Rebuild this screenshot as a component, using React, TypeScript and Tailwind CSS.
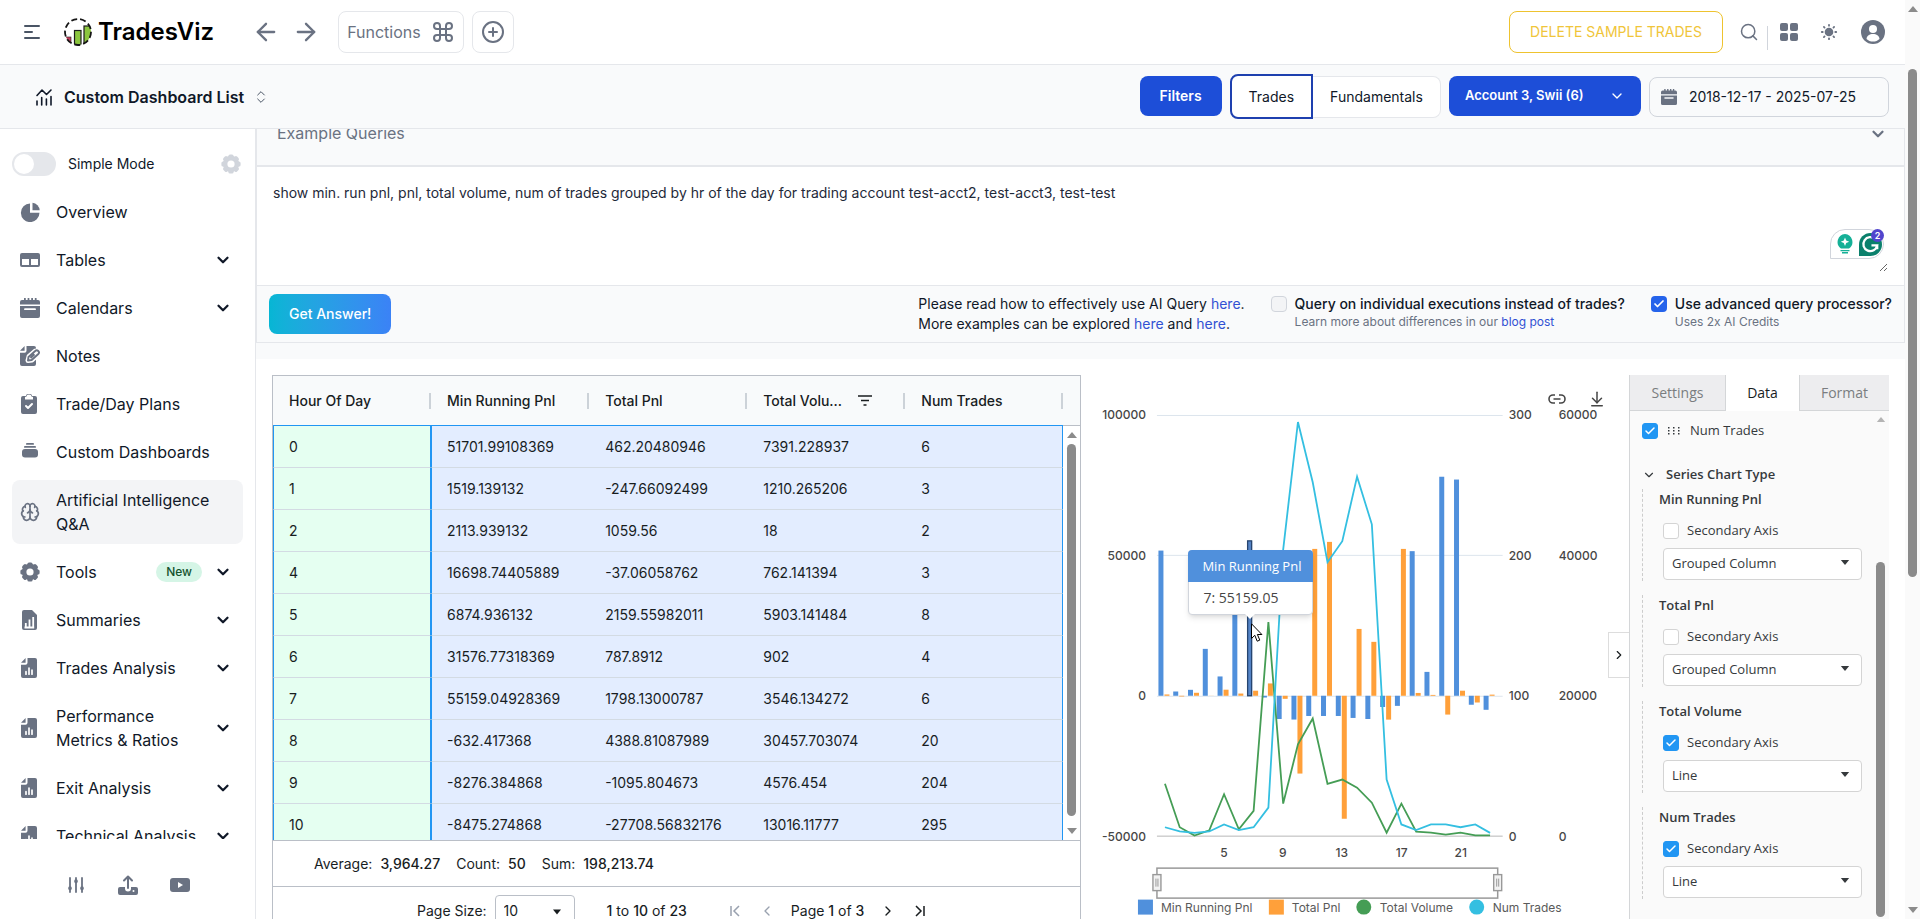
import React from "react";
import { ArrowLeft, ArrowRight, ArrowDownToLine, Brain, Check, ChevronDown, ChevronLeft, ChevronRight, ChevronsUpDown, CirclePlus, Command, Search } from "lucide-react";

type IconProps = { className?: string };

const GEAR_TEETH = [0, 45, 90, 135, 180, 225, 270, 315];

function PieIcon({ className }: IconProps) {
  return (
    <svg viewBox="0 0 20 20" className={className} fill="currentColor" aria-hidden="true">
      <path d="M10 1.500v9.300h9.500A9.300 9.300 0 1 1 10 1.500Z" />
      <path d="M12.500.700a8.200 8.200 0 0 1 7.200 7.600h-7.200Z" />
    </svg>
  );
}

function GearIcon({ className }: IconProps) {
  return (
    <svg viewBox="0 0 20 20" className={className} fill="currentColor" aria-hidden="true">
      <mask id="gear-hole">
        <rect width="20" height="20" fill="white" />
        <circle cx="10" cy="10" r="3.6" fill="black" />
      </mask>
      <g mask="url(#gear-hole)">
        <circle cx="10" cy="10" r="8.2" />
        {GEAR_TEETH.map((a) => (
          <rect key={a} x="7.4" y="0.4" width="5.2" height="5" rx="1.6" transform={`rotate(${a} 10 10)`} />
        ))}
      </g>
    </svg>
  );
}

function TableIcon({ className }: IconProps) {
  return (
    <svg viewBox="0 0 20 20" className={className} aria-hidden="true">
      <rect x="0" y="3" width="20" height="14" rx="2" fill="currentColor" />
      <rect x="2" y="9" width="7" height="6" fill="white" />
      <rect x="11" y="9" width="7" height="6" fill="white" />
    </svg>
  );
}

function CalendarIcon({ className }: IconProps) {
  return (
    <svg viewBox="0 0 20 20" className={className} fill="currentColor" aria-hidden="true">
      <path d="M0 6.5V4a2 2 0 0 1 2-2h2V.6a.9.9 0 0 1 1.8 0V2h1.8V.6a.9.9 0 0 1 1.8 0V2h1.8V.6a.9.9 0 0 1 1.8 0V2h1.8V.6a.9.9 0 0 1 1.8 0V2H18a2 2 0 0 1 2 2v2.500Z" />
      <path fillRule="evenodd" d="M0 8h20v10a2 2 0 0 1-2 2H2a2 2 0 0 1-2-2V8Zm5 2.200a.9.9 0 0 0 0 1.900h10a.9.9 0 0 0 0-1.900H5Z" />
    </svg>
  );
}

function NotesIcon({ className }: IconProps) {
  return (
    <svg viewBox="0 0 20 20" className={className} aria-hidden="true">
      <path fill="currentColor" d="M0 4.800 4.600 0v4.800H0ZM6.500 0H14a2 2 0 0 1 2 2v16a2 2 0 0 1-2 2H2a2 2 0 0 1-2-2V6.700h4.500a2 2 0 0 0 2-2V0Z" />
      <path fill="white" stroke="white" strokeWidth="5" strokeLinejoin="round" d="m8 14.500 1-4 6.500-5.500 3 3-6.500 6-4 .500Z" />
      <path fill="none" stroke="currentColor" strokeWidth="1.900" strokeLinejoin="round" d="m8 14.500.500-3.500 6.700-6a2.100 2.100 0 0 1 3.100 3l-6.600 6L8 14.500Zm2.500-2.500 4-3.700" />
    </svg>
  );
}

function ClipboardIcon({ className }: IconProps) {
  return (
    <svg viewBox="0 0 20 20" className={className} aria-hidden="true">
      <path fill="currentColor" d="M3 2h3a2 2 0 0 1 2-2h2a2 2 0 0 1 2 2h3a2 2 0 0 1 2 2v14a2 2 0 0 1-2 2H3a2 2 0 0 1-2-2V4a2 2 0 0 1 2-2Z" />
      <path fill="white" d="M6.500 2.500a2.500 2 0 0 1 5 0L13 3v2.500H5V3l1.500-.500Z" />
      <path fill="none" stroke="white" strokeWidth="2" strokeLinecap="round" strokeLinejoin="round" d="m6 12 2 2 4-4" />
    </svg>
  );
}

function StackIcon({ className }: IconProps) {
  return (
    <svg viewBox="0 0 20 20" className={className} fill="currentColor" aria-hidden="true">
      <rect x="6" y="1" width="8" height="1.800" rx=".9" />
      <rect x="4" y="4" width="12" height="1.800" rx=".9" />
      <rect x="2" y="7" width="16" height="8.500" rx="3" />
    </svg>
  );
}

function ReportIcon({ className }: IconProps) {
  return (
    <svg viewBox="0 0 20 20" className={className} aria-hidden="true">
      <path fill="currentColor" d="M4 0h8l5 5v13a2 2 0 0 1-2 2H4a2 2 0 0 1-2-2V2a2 2 0 0 1 2-2Z" />
      <path stroke="white" strokeWidth="1.800" fill="none" d="M5.800 18v-5M9.500 18V9.500M13.200 18V7M4.500 17.500h9.700" />
    </svg>
  );
}

function FileChartIcon({ className }: IconProps) {
  return (
    <svg viewBox="0 0 20 20" className={className} aria-hidden="true">
      <path fill="currentColor" d="M1 4.800 5.600 0v4.800H1ZM7.500 0H15a2 2 0 0 1 2 2v16a2 2 0 0 1-2 2H3a2 2 0 0 1-2-2V6.700h4.500a2 2 0 0 0 2-2V0Z" />
      <path stroke="white" strokeWidth="1.700" strokeLinecap="round" fill="none" d="M6 16.200v-2.500M9 16.200V10M12 16.200v-4" />
    </svg>
  );
}

function BrainIcon({ className }: IconProps) {
  return <Brain className={className} strokeWidth={2} />;
}

function MenuIcon() {
  return (
    <svg viewBox="0 0 16 16" className="size-4" stroke="currentColor" strokeWidth="2" strokeLinecap="round" aria-hidden="true">
      <path d="M1 2h14M1 8h7M1 14h14" />
    </svg>
  );
}

function Logo() {
  return (
    <svg viewBox="0 0 28 28" className="size-7" aria-hidden="true">
      <clipPath id="logo-circle"><circle cx="14" cy="14" r="13" /></clipPath>
      <g clipPath="url(#logo-circle)" stroke="#1c1c1c">
        <rect x="1" y="19" width="6" height="10" fill="#c2405e" strokeWidth=".6" />
        <rect x="10.500" y="12.500" width="6.500" height="16" fill="#8cc63f" strokeWidth="1.200" />
        <rect x="20" y="8" width="8" height="20" fill="#8cc63f" strokeWidth="1.200" />
      </g>
      <circle cx="14" cy="14" r="13" fill="none" stroke="#161616" strokeWidth="1.800" strokeDasharray="6 3" />
    </svg>
  );
}

function DashboardIcon() {
  return (
    <svg viewBox="0 0 18 18" className="size-[18px]" fill="none" stroke="currentColor" strokeWidth="1.600" strokeLinecap="round" strokeLinejoin="round" aria-hidden="true">
      <path d="M2 7.500 7 2l4.500 4.500L16 2M2 17v-4M6.700 17V9.500M11.400 17v-6M16 17V8.500" />
    </svg>
  );
}

function GridIcon() {
  return (
    <svg viewBox="0 0 20 20" className="size-5" fill="currentColor" aria-hidden="true">
      <rect x="1" y="1" width="8" height="8" rx="2" /><rect x="11" y="1" width="8" height="8" rx="2" />
      <rect x="1" y="11" width="8" height="8" rx="2" /><rect x="11" y="11" width="8" height="8" rx="2" />
    </svg>
  );
}

function SunIcon() {
  return (
    <svg viewBox="0 0 20 20" className="size-5" aria-hidden="true">
      <circle cx="10" cy="10" r="4.300" fill="currentColor" />
      <g stroke="currentColor" strokeWidth="1.800" strokeLinecap="round">
        {GEAR_TEETH.map((a) => <path key={a} d="M10 2.800v.9" transform={`rotate(${a} 10 10)`} />)}
      </g>
    </svg>
  );
}

function UserIcon() {
  return (
    <svg viewBox="0 0 24 24" className="size-6" aria-hidden="true">
      <circle cx="12" cy="12" r="12" fill="currentColor" />
      <circle cx="12" cy="9" r="4" fill="white" />
      <path fill="white" d="M5.500 19c.3-3.500 3-5 6.500-5s6.200 1.500 6.500 5c-1.700 1.700-4 2.600-6.500 2.600S7.200 20.700 5.500 19Z" />
    </svg>
  );
}

function Triangle({ className }: IconProps) {
  return <svg viewBox="0 0 10 6" className={className} fill="currentColor" aria-hidden="true"><path d="M0 0h10L5 6Z" /></svg>;
}

function TriangleUp({ className }: IconProps) {
  return <svg viewBox="0 0 10 6" className={className} fill="currentColor" aria-hidden="true"><path d="M0 6h10L5 0Z" /></svg>;
}

type NavItem = { label: string; icon: React.ComponentType<IconProps>; expandable?: boolean; badge?: string; active?: boolean };

const NAV: NavItem[] = [
  { label: "Overview", icon: PieIcon },
  { label: "Tables", icon: TableIcon, expandable: true },
  { label: "Calendars", icon: CalendarIcon, expandable: true },
  { label: "Notes", icon: NotesIcon },
  { label: "Trade/Day Plans", icon: ClipboardIcon },
  { label: "Custom Dashboards", icon: StackIcon },
  { label: "Artificial Intelligence Q&A", icon: BrainIcon, active: true },
  { label: "Tools", icon: GearIcon, expandable: true, badge: "New" },
  { label: "Summaries", icon: ReportIcon, expandable: true },
  { label: "Trades Analysis", icon: FileChartIcon, expandable: true },
  { label: "Performance Metrics & Ratios", icon: FileChartIcon, expandable: true },
  { label: "Exit Analysis", icon: FileChartIcon, expandable: true },
  { label: "Technical Analysis", icon: FileChartIcon, expandable: true },
];

const COLUMNS = ["Hour Of Day", "Min Running Pnl", "Total Pnl", "Total Volu...", "Num Trades"];

const ROWS = [
  ["0", "51701.99108369", "462.20480946", "7391.228937", "6"],
  ["1", "1519.139132", "-247.66092499", "1210.265206", "3"],
  ["2", "2113.939132", "1059.56", "18", "2"],
  ["4", "16698.74405889", "-37.06058762", "762.141394", "3"],
  ["5", "6874.936132", "2159.55982011", "5903.141484", "8"],
  ["6", "31576.77318369", "787.8912", "902", "4"],
  ["7", "55159.04928369", "1798.13000787", "3546.134272", "6"],
  ["8", "-632.417368", "4388.81087989", "30457.703074", "20"],
  ["9", "-8276.384868", "-1095.804673", "4576.454", "204"],
  ["10", "-8475.274868", "-27708.56832176", "13016.11777", "295"],
];

function Header() {
  return (
    <header className="flex h-[65px] shrink-0 items-center border-b border-gray-200 bg-white pl-6 pr-5 text-gray-500">
      <button aria-label="Toggle sidebar" className="text-gray-600"><MenuIcon /></button>
      <a href="#" className="ml-6 flex items-center gap-[6px] text-2xl font-semibold text-black"><Logo />TradesViz</a>
      <button aria-label="Back" className="ml-[38px]"><ArrowLeft className="size-7" strokeWidth={2} /></button>
      <button aria-label="Forward" className="ml-3"><ArrowRight className="size-7" strokeWidth={2} /></button>
      <button className="ml-[18px] flex h-[42px] items-center gap-2.5 rounded-lg border border-gray-200 px-2">Functions<Command className="size-6" strokeWidth={2} /></button>
      <button aria-label="Add" className="ml-2 flex h-[42px] items-center rounded-lg border border-gray-200 px-2"><CirclePlus className="size-6" strokeWidth={2} /></button>
      <button className="ml-auto h-[42px] rounded-lg border border-[#eec32f] px-5 text-sm text-[#f0c53a]">DELETE SAMPLE TRADES</button>
      <button aria-label="Search" className="ml-4"><Search className="size-5" strokeWidth={1.800} /></button>
      <span className="ml-2 mt-3 h-6 w-px bg-gray-300" />
      <button aria-label="Apps" className="ml-[11px]"><GridIcon /></button>
      <button aria-label="Theme" className="ml-5"><SunIcon /></button>
      <button aria-label="Account" className="ml-[22px]"><UserIcon /></button>
    </header>
  );
}

function Toolbar() {
  return (
    <div className="flex h-16 shrink-0 items-center border-b border-gray-200 bg-[#f9fafb] pl-[35px] pr-4 text-gray-900">
      <button className="flex items-center gap-[11px] font-semibold">
        <DashboardIcon />Custom Dashboard List<ChevronsUpDown className="-ml-0.5 size-4 text-gray-600" strokeWidth={1.500} />
      </button>
      <button className="mb-px ml-auto h-10 rounded-lg bg-[#1d4ed8] px-5 text-sm font-semibold text-white">Filters</button>
      <div className="ml-2 flex items-center text-sm">
        <button className="h-[45px] rounded-l-lg border-2 border-[#1e40af] bg-white px-[17px]">Trades</button>
        <button className="h-[42px] rounded-r-lg border border-l-0 border-gray-200 bg-white px-[17px]">Fundamentals</button>
      </div>
      <button className="mb-px ml-2 flex h-10 w-[192px] items-center justify-between rounded-lg bg-[#1d4ed8] px-4 text-[13px] font-semibold text-white">
        <span>Account 3, Swii (6)</span>
        <ChevronDown className="size-4" strokeWidth={2} />
      </button>
      <button className="ml-2 mt-px flex h-10 items-center gap-3 rounded-lg border border-gray-300 bg-[#f9fafb] pl-[11px] pr-8 text-sm">
        <CalendarIcon className="size-4 text-gray-500" />2018-12-17 - 2025-07-25
      </button>
    </div>
  );
}

function Sidebar() {
  return (
    <aside className="flex w-64 shrink-0 flex-col border-r border-gray-200 bg-white">
      <div className="mb-4 mt-[23px] flex h-6 items-center px-3">
        <label className="flex items-center gap-3 text-sm text-gray-900">
          <input type="checkbox" className="peer sr-only" />
          <span className="flex h-6 w-11 items-center rounded-full border-2 border-gray-200 bg-gray-200"><span className="size-5 rounded-full bg-white" /></span>
          Simple Mode
        </label>
        <button aria-label="Sidebar settings" className="ml-auto mr-0.5 text-gray-300"><GearIcon className="size-5" /></button>
      </div>
      <nav className="min-h-0 flex-1 overflow-hidden px-3">
        <ul className="space-y-2">
          {NAV.map(({ label, icon: Icon, expandable, badge, active }) => (
            <li key={label}>
              <a href="#" className={`flex items-center rounded-lg px-2 py-2 text-base leading-6 text-gray-900 ${active ? "bg-[#f3f4f6]" : ""}`}>
                <Icon className="size-5 shrink-0 text-gray-500" />
                <span className={`ml-4 flex-1 ${expandable ? "pr-4" : ""}`}>{label}</span>
                {badge && <span className="mr-3 rounded-full bg-[#d5f5e6] px-2.5 text-xs font-medium leading-5 text-[#14532d]">{badge}</span>}
                {expandable && <ChevronDown className="mr-[3px] size-[18px] shrink-0" strokeWidth={3} />}
              </a>
            </li>
          ))}
        </ul>
      </nav>
      <div className="flex h-20 shrink-0 items-center justify-center gap-8 pt-3 text-gray-500">
        <button aria-label="Preferences">
          <svg viewBox="0 0 20 20" className="size-5" fill="none" stroke="currentColor" strokeWidth="1.800" strokeLinecap="round" aria-hidden="true">
            <path d="M4 3v14M10 3v14M16 3v14" /><path strokeWidth="3.600" d="M4 13v.4M10 6v.4M16 13v.4" />
          </svg>
        </button>
        <button aria-label="Import">
          <svg viewBox="0 0 20 20" className="size-5" aria-hidden="true">
            <path fill="currentColor" d="M2 12h5v1.500a3 3 0 0 0 6 0V12h5a2 2 0 0 1 2 2v4a2 2 0 0 1-2 2H2a2 2 0 0 1-2-2v-4a2 2 0 0 1 2-2Z" />
            <path fill="none" stroke="currentColor" strokeWidth="2" strokeLinecap="round" strokeLinejoin="round" d="M10 13V2M6 5.500 10 1.500l4 4" />
            <circle cx="15.500" cy="16" r="1" fill="white" />
          </svg>
        </button>
        <button aria-label="Videos">
          <svg viewBox="0 0 20 20" className="size-5" aria-hidden="true">
            <rect y="3" width="20" height="14" rx="3" fill="currentColor" /><path fill="white" d="m8 7 5 3-5 3Z" />
          </svg>
        </button>
      </div>
    </aside>
  );
}

function WritingAssistant() {
  return (
    <div className="absolute bottom-[26px] right-5 flex h-[30px] w-[54px] items-center gap-1.5 rounded-[15px] rounded-bl-none border border-gray-300 bg-white pl-1.5">
      <svg viewBox="0 0 16 20" className="h-5 w-4" aria-hidden="true">
        <path fill="#15b097" d="M8 0a8 8 0 0 1 4 14.500H4A8 8 0 0 1 8 0ZM3.500 16h9v1.200h-9ZM5 18h6v1.500H5Z" />
        <path fill="white" d="m8 3.500 1.200 3 3 1.200-3 1.200L8 12 6.800 8.900l-3-1.200 3-1.200Z" />
      </svg>
      <svg viewBox="0 0 24 24" className="size-[23px]" aria-hidden="true">
        <path fill="#0b806c" d="M12 0a12 12 0 0 1 0 24H0V12A12 12 0 0 1 12 0Z" />
        <path fill="none" stroke="white" strokeWidth="2.400" d="M17 6.500A7.300 7.300 0 1 0 19 13h-6m6-.8V17" />
      </svg>
      <span className="absolute -right-px -top-px flex size-[13px] items-center justify-center rounded-full bg-[#5145cd] text-[9px] font-semibold text-white">2</span>
    </div>
  );
}

function QueryPanel() {
  return (
    <>
      <div className="shrink-0 border-x border-gray-200">
        <div className="flex h-[38px] items-start justify-between overflow-hidden border-b-2 border-gray-200 bg-[#f9fafb] pl-5 pr-[17px]">
          <h2 className="-mt-2 text-base leading-6 text-gray-500">Example Queries</h2>
          <button aria-label="Expand example queries" className="-mt-1 text-gray-500"><ChevronDown className="size-[18px]" strokeWidth={3} /></button>
        </div>
        <div className="relative border-b border-gray-200 bg-white pb-[13px] pr-4 pt-1">
          <textarea
            aria-label="Query"
            className="block h-[101px] w-full resize-y px-4 py-3 text-sm leading-5 text-gray-800 outline-none"
            defaultValue="show min. run pnl, pnl, total volume, num of trades grouped by hr of the day for trading account test-acct2, test-acct3, test-test"
          />
          <WritingAssistant />
        </div>
        <div className="flex h-[57px] items-center justify-between border-b border-gray-200 bg-[#f9fafb] px-3 text-sm text-gray-900">
          <button className="h-10 rounded-lg bg-linear-to-r from-[#06b6d4] to-[#3b82f6] px-5 font-medium text-white">Get Answer!</button>
          <div className="flex items-start leading-5">
            <p>
              Please read how to effectively use AI Query <a href="#" className="text-[#3151d3]">here</a>.<br />
              More examples can be explored <a href="#" className="text-[#3151d3]">here</a> and <a href="#" className="text-[#3151d3]">here</a>.
            </p>
            <div className="ml-[26px] flex gap-2">
              <input id="executions" type="checkbox" className="mt-0.5 size-4 appearance-none rounded border border-gray-300 bg-gray-100" />
              <div><label htmlFor="executions" className="block font-medium">Query on individual executions instead of trades?</label>
                <p className="text-xs text-gray-500">Learn more about differences in our <a href="#" className="text-[#3151d3]">blog post</a></p></div>
            </div>
            <div className="ml-[26px] flex gap-2">
              <span className="relative mt-0.5 size-4">
                <input id="advanced" type="checkbox" defaultChecked className="block size-4 appearance-none rounded bg-[#2563eb]" />
                <Check className="pointer-events-none absolute left-0.5 top-0.5 size-3 text-white" strokeWidth={3.500} />
              </span>
              <div><label htmlFor="advanced" className="block font-medium">Use advanced query processor?</label>
                <p className="text-xs text-gray-500">Uses 2x AI Credits</p></div>
            </div>
          </div>
        </div>
      </div>
      <div className="h-4 shrink-0 bg-[#f9fafb]" />
    </>
  );
}

const CELL_STYLES = [
  "border-x border-x-[#2196f3] bg-[#e5fff1] pl-[15px]",
  "border-l border-l-[#2196f3] bg-[#e3edff] pl-[15px]",
  "bg-[#e3edff] pl-4",
  "bg-[#e3edff] pl-4",
  "border-r border-r-[#2196f3] bg-[#e3edff] pl-4",
];

function Grid() {
  return (
    <section className="flex min-w-0 flex-[808] flex-col border border-b-0 border-[#babfc7] text-sm text-[#181d1f]">
      <div className="flex h-[465px] shrink-0 overflow-hidden border-b border-[#babfc7] bg-[#f8fafb]">
        <div className="min-w-0 flex-1">
          <table className="w-full table-fixed border-separate border-spacing-0">
            <thead>
              <tr>
                {COLUMNS.map((c, i) => (
                  <th key={c} className="h-[50px] border-b border-[#2196f3] p-0 text-left font-medium">
                    <div className="flex h-4 items-center justify-between border-r-2 border-[#ccd2d8] pl-4">
                      <span>{c}</span>
                      {i === 3 && (
                        <svg viewBox="0 0 16 12" className="mr-[30px] h-3 w-4" stroke="currentColor" strokeWidth="1.500" aria-hidden="true"><path d="M1 1h14M4 5.500h8M6.500 10h3" /></svg>
                      )}
                    </div>
                  </th>
                ))}
              </tr>
            </thead>
            <tbody>
              {ROWS.map((r) => (
                <tr key={r[0]}>
                  {r.map((v, i) => (
                    <td key={i} className={`h-[42px] border-b border-b-[#d3dbe3] py-0 pr-4 ${CELL_STYLES[i]}`}>{v}</td>
                  ))}
                </tr>
              ))}
            </tbody>
          </table>
        </div>
        <div className="flex w-[17px] flex-col">
          <div className="h-[50px] border-b border-[#babfc7]" />
          <div className="flex flex-1 flex-col items-center bg-white py-1.5 text-[#8b8b8b]">
            <TriangleUp className="h-1.5 w-2.5" />
            <div className="mb-3 mt-1.5 w-[9px] flex-1 rounded-full bg-[#8b8b8b]" />
            <Triangle className="h-1.5 w-2.5" />
          </div>
        </div>
      </div>
      <div className="flex h-[46px] shrink-0 items-center gap-4 border-b border-[#babfc7] bg-white pl-[41px]">
        <span>Average:<b className="ml-2 font-medium">3,964.27</b></span>
        <span>Count:<b className="ml-2 font-medium">50</b></span>
        <span>Sum:<b className="ml-2 font-medium">198,213.74</b></span>
      </div>
      <div className="flex h-12 shrink-0 items-center bg-white pl-36">
        <label htmlFor="page-size">Page Size:</label>
        <span className="relative ml-2">
          <select id="page-size" className="h-8 w-20 appearance-none rounded border border-[#babfc7] bg-white px-2"><option>10</option></select>
          <Triangle className="pointer-events-none absolute right-3.5 top-3.5 h-1.5 w-2" />
        </span>
        <span className="ml-8"><b className="font-medium">1</b> to <b className="font-medium">10</b> of <b className="font-medium">23</b></span>
        <button aria-label="First page" className="ml-[42px] flex text-gray-400"><svg viewBox="0 0 12 12" className="size-3" fill="none" stroke="currentColor" strokeWidth="1.500" aria-hidden="true"><path d="M2 1v10M10 1 5 6l5 5" /></svg></button>
        <button aria-label="Previous page" className="ml-[18px] text-gray-400"><ChevronLeft className="size-4" /></button>
        <span className="ml-4">Page <b className="font-medium">1</b> of <b className="font-medium">3</b></span>
        <button aria-label="Next page" className="ml-4"><ChevronRight className="size-4" /></button>
        <button aria-label="Last page" className="ml-[18px]"><svg viewBox="0 0 12 12" className="size-3" fill="none" stroke="currentColor" strokeWidth="1.500" aria-hidden="true"><path d="M10 1v10M2 1l5 5-5 5" /></svg></button>
      </div>
    </section>
  );
}

const MIN_PNL = [51702, 1519, 2114, 16699, 6875, 31577, 55159, -632, -8276, -8475, -7200, -7200, -7200, -7900, -8276, -4000, -3600, 51500, 8500, 78000, 77000, -3200, -5000];
const TOTAL_PNL = [462, -248, 1060, -37, 2160, 788, 1798, 4389, -1096, -27709, 52300, 54800, -43800, 23800, 19200, -8500, 52300, 1000, 300, -6700, 1800, -2400, 400];
const VOLUME = [7391, 1210, 18, 762, 5903, 902, 3546, 30458, 4576, 13016, 16700, 7400, 8000, 6850, 4700, 430, 4560, 570, 430, 140, 430, 40, 40];
const TRADES = [6, 3, 2, 3, 8, 4, 6, 20, 204, 295, 252, 195, 210, 256, 222, 40, 8, 4, 8, 8, 6, 8, 2];

const ZERO = 321;
const BASE = 461;
const bandX = (i: number) => 84 + i * 14.790;
const barHeight = (v: number) => (Math.abs(v) * 140.500) / 50000;
const linePoints = (values: number[], max: number) => values.map((v, i) => `${bandX(i)},${BASE - (v / max) * 421}`).join(" ");

function Bars({ values, offset, fill }: { values: number[]; offset: number; fill: string }) {
  return (
    <g fill={fill}>
      {values.map((v, i) => (
        <rect key={i} x={bandX(i) + offset} y={v > 0 ? ZERO - barHeight(v) : ZERO} width="5" height={barHeight(v)} />
      ))}
    </g>
  );
}

function Chart() {
  return (
    <section className="relative min-w-0 flex-[548] bg-white">
      <svg viewBox="0 0 548 544" className="block w-full font-[Inter,sans-serif]" role="img" aria-label="Trades by hour of day">
        <path d="M76 40.500h346M76 180.500h346M76 321.500h346" stroke="#dde5ed" />
        <path d="M76 461.500h346" stroke="#b8b8b8" />
        <Bars values={MIN_PNL} offset={-6.500} fill="#5090dc" />
        <Bars values={TOTAL_PNL} offset={-0.500} fill="#ffa03a" />
        <rect x={bandX(6) - 6} y={ZERO - barHeight(55159)} width="4" height={barHeight(55159)} fill="#5585c8" stroke="#27456f" strokeWidth="1.300" />
        <polyline points={linePoints(VOLUME, 60000)} fill="none" stroke="#459d55" strokeWidth="1.800" />
        <polyline points={linePoints(TRADES, 300)} fill="none" stroke="#34bfe1" strokeWidth="1.800" />
        <g fontSize="12" fontWeight="500" fill="#464646">
          <g textAnchor="end">
            <text x="65" y="44">100000</text><text x="65" y="185">50000</text><text x="65" y="325">0</text><text x="65" y="466">-50000</text>
          </g>
          <text x="428" y="44">300</text><text x="428" y="185">200</text><text x="428" y="325">100</text><text x="428" y="466">0</text>
          <text x="478" y="44">60000</text><text x="478" y="185">40000</text><text x="478" y="325">20000</text><text x="478" y="466">0</text>
          <g textAnchor="middle">
            <text x="143" y="482">5</text><text x="202" y="482">9</text><text x="261" y="482">13</text><text x="321" y="482">17</text><text x="380" y="482">21</text>
          </g>
        </g>
        <rect x="76" y="493.500" width="341" height="30" fill="white" stroke="#999" strokeWidth="1.500" />
        {[76, 417].map((x) => (
          <g key={x} stroke="#999">
            <rect x={x - 4} y="500" width="8" height="16" fill="#f2f2f2" strokeWidth="1.400" />
            <path d={`M${x - 1} 504v8M${x + 1} 504v8`} />
          </g>
        ))}
        <g fontSize="12" fill="#5a5a5a">
          <rect x="57" y="525" width="15" height="15" fill="#5090dc" /><text x="80" y="537">Min Running Pnl</text>
          <rect x="188" y="525" width="15" height="15" fill="#ffa03a" /><text x="211" y="537">Total Pnl</text>
          <circle cx="283" cy="532.500" r="7.500" fill="#459d55" /><text x="299" y="537">Total Volume</text>
          <circle cx="396" cy="532.500" r="7.500" fill="#34bfe1" /><text x="412" y="537">Num Trades</text>
        </g>
      </svg>
      <div className="absolute right-[23px] top-[15px] flex items-center gap-[22px] text-[#464646]">
        <button aria-label="Unlink chart">
          <svg viewBox="0 0 18 10" className="h-2.5 w-[18px]" fill="none" stroke="currentColor" strokeWidth="1.600" aria-hidden="true"><path d="M7 1H5a4 4 0 0 0 0 8h2M11 1h2a4 4 0 0 1 0 8h-2M5.500 5h7" /></svg>
        </button>
        <button aria-label="Download chart"><ArrowDownToLine className="size-[18px]" strokeWidth={2} /></button>
      </div>
      <div className="absolute left-[107px] top-[175px] w-[125px] whitespace-nowrap rounded-sm border border-gray-300 bg-white font-['Open_Sans',sans-serif] text-[#464646] shadow-md">
        <div className="-mx-px -mt-px h-8 rounded-t-sm bg-[#5090dc] px-3.5 text-[13px] leading-8 text-white">Min Running Pnl</div>
        <div className="px-3.5 text-sm leading-8">7: 55159.05</div>
        <svg viewBox="0 0 10 6" className="absolute left-[56px] top-full h-1.5 w-2.5" aria-hidden="true"><path d="M0 0l5 5 5-5Z" fill="white" /></svg>
      </div>
      <svg viewBox="0 0 12 20" className="absolute left-[170px] top-[248px] h-5 w-3" aria-hidden="true">
        <path fill="white" stroke="black" d="M.500.800v14.700l3.300-3.200 2.400 5.900 2.600-1.100-2.400-5.600h4.500Z" />
      </svg>
      <button aria-label="Collapse panel" className="absolute right-0 top-[257px] flex h-[46px] w-[21px] items-center justify-center border border-r-0 border-[#dddddd] bg-white text-[#181d1f]"><ChevronRight className="size-3.5" strokeWidth={2} /></button>
    </section>
  );
}

function BlueCheckbox({ id, checked }: { id: string; checked: boolean }) {
  return (
    <span className="relative size-4 shrink-0">
      <input id={id} type="checkbox" defaultChecked={checked} className="block size-4 appearance-none rounded-[3px] border border-[#d4d4d4] bg-white checked:border-[#2196f3] checked:bg-[#2196f3]" />
      {checked && <Check className="pointer-events-none absolute left-0.5 top-0.5 size-3 text-white" strokeWidth={3} />}
    </span>
  );
}

const SERIES = [
  { name: "Min Running Pnl", secondary: false, type: "Grouped Column" },
  { name: "Total Pnl", secondary: false, type: "Grouped Column" },
  { name: "Total Volume", secondary: true, type: "Line" },
  { name: "Num Trades", secondary: true, type: "Line" },
];

function ChartPanel() {
  return (
    <aside className="flex w-[260px] shrink-0 flex-col border-l border-[#d4d6d8] bg-[#fafafa] font-['Open_Sans',sans-serif] text-[13px] text-[#35393c]">
      <div role="tablist" className="flex h-9 shrink-0 text-sm text-[#7a7d80]">
        <button role="tab" className="w-24 border-b border-r border-[#d4d6d8] bg-[#ededef]">Settings</button>
        <button role="tab" aria-selected="true" className="flex-1 bg-white text-[#181d1f]">Data</button>
        <button role="tab" className="w-[90px] border-b border-l border-[#d4d6d8] bg-[#ededef]">Format</button>
      </div>
      <div className="flex min-h-0 flex-1">
        <div className="min-w-0 flex-1 overflow-hidden pl-3">
          <div className="mt-3 flex h-4 items-center">
            <BlueCheckbox id="use-trades" checked />
            <svg viewBox="0 0 12 8" className="ml-2.5 h-2 w-3" fill="currentColor" aria-hidden="true">
              {[1, 6, 11].map((x) => [0, 3, 6].map((y) => <rect key={`${x}-${y}`} x={x - 1} y={y} width="1.500" height="1.500" />))}
            </svg>
            <label htmlFor="use-trades" className="ml-2.5">Num Trades</label>
          </div>
          <button className="mt-[26px] flex h-5 items-center gap-2.5 font-semibold"><ChevronDown className="size-3.5" />Series Chart Type</button>
          {SERIES.map((s, i) => (
            <fieldset key={s.name} className="mb-[14px] mt-1 h-[92px] border-l border-dashed border-[#cccccc] pl-5 pr-2.5">
              <p className="-ml-1 mb-3 leading-5 font-semibold">{s.name}</p>
              <div className="flex h-5 items-center gap-2">
                <BlueCheckbox id={`secondary-${i}`} checked={s.secondary} />
                <label htmlFor={`secondary-${i}`}>Secondary Axis</label>
              </div>
              <div className="relative mt-[7px]">
                <select aria-label={`${s.name} chart type`} className="h-8 w-full appearance-none rounded border border-[#d4d4d4] bg-white px-2"><option>{s.type}</option></select>
                <Triangle className="pointer-events-none absolute right-3 top-3 h-[5px] w-2.5" />
              </div>
            </fieldset>
          ))}
        </div>
        <div className="flex w-[17px] flex-col items-center pb-0.5 pt-1.5">
          <TriangleUp className="h-[5px] w-2.5 text-[#b4b4b4]" />
          <div className="mt-auto h-[71%] w-[9px] rounded-full bg-[#8b8b8b]" />
        </div>
      </div>
    </aside>
  );
}

function PageScrollbar() {
  return (
    <div className="flex w-[15px] shrink-0 flex-col items-center bg-[#fafafa] py-1.5 text-[#8b8b8b]" aria-hidden="true">
      <TriangleUp className="h-1.5 w-2.5" />
      <div className="mt-[57px] h-[56%] w-[9px] rounded-full bg-[#8b8b8b]" />
      <Triangle className="mt-auto h-1.5 w-2.5" />
    </div>
  );
}

export default function App() {
  return (
    <div className="flex h-screen overflow-hidden bg-white font-[Inter,sans-serif]">
      <div className="flex min-w-0 flex-1 flex-col">
        <Header />
        <Toolbar />
        <div className="flex min-h-0 flex-1">
          <Sidebar />
          <main className="flex min-w-0 flex-1 flex-col overflow-hidden">
            <QueryPanel />
            <div className="ml-4 mr-4 mt-4 flex min-h-0 flex-1">
              <Grid />
              <Chart />
              <ChartPanel />
            </div>
          </main>
        </div>
      </div>
      <PageScrollbar />
    </div>
  );
}
